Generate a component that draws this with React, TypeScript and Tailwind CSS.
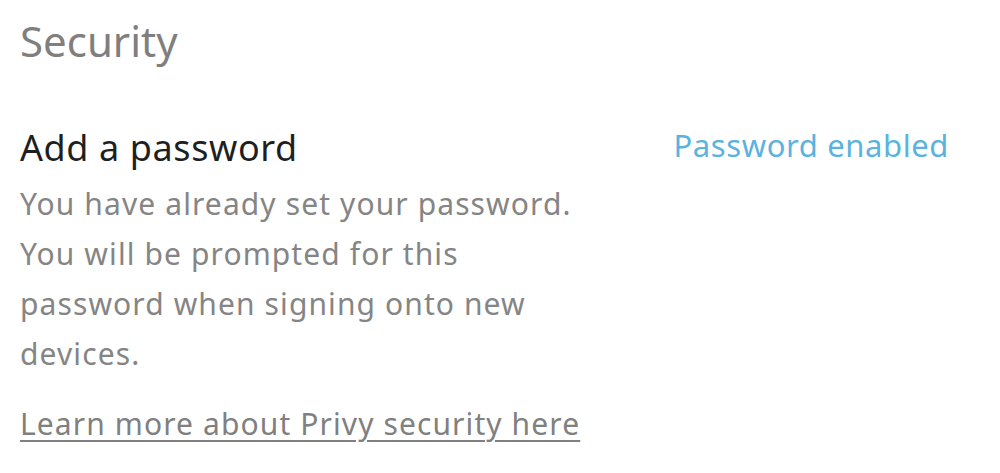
export default function App() {
  return (
    <div className="w-[1000px] h-[473px] bg-white overflow-hidden" style={{ fontFamily: '"Noto Sans", sans-serif' }}>
      <div className="pl-[20px] pr-[50px] pt-[13px]">
        <h1 className="text-[42px] leading-[56px] text-[#7f7f7f] font-normal">Security</h1>
        <div className="mt-[57px] flex items-start justify-between">
          <div className="flex flex-col items-start">
            <h2 className="text-[36px] leading-[44px] text-[#1f1f1f] tracking-[0.6px]">Add a password</h2>
            <p className="mt-[9px] text-[30px] leading-[50px] text-[#858585] tracking-[1.1px]">
              You have already set your password.<br />
              You will be prompted for this<br />
              password when signing onto new<br />
              devices.
            </p>
            <a href="#" className="mt-[20px] text-[30px] leading-[50px] text-[#808080] tracking-[1.1px] underline underline-offset-[5px] decoration-[2px]">
              Learn more about Privy security here
            </a>
          </div>
          <div className="-mt-[1px] mr-[1px] text-[31px] leading-[40px] text-[#5ab3df] tracking-[0.6px]">Password enabled</div>
        </div>
      </div>
    </div>
  );
}
